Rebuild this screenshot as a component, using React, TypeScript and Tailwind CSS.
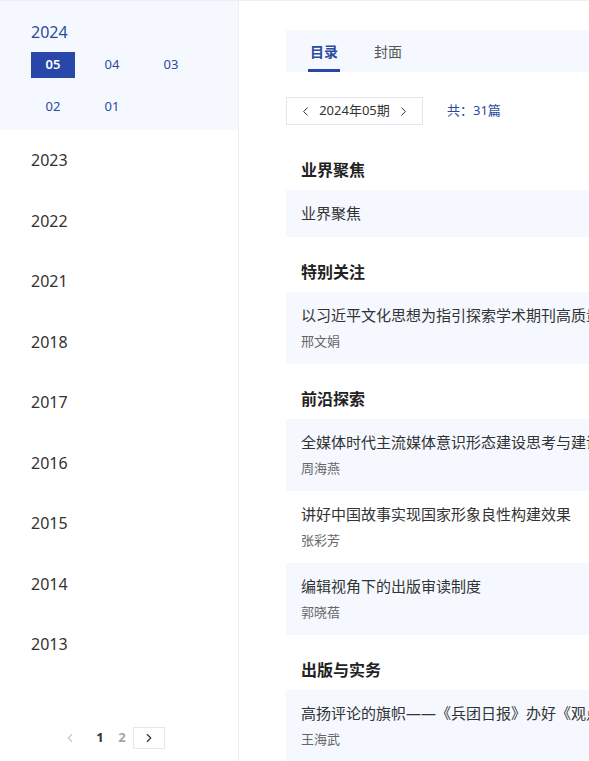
import React from "react";
import { ChevronLeft, ChevronRight } from "lucide-react";

const font = { fontFamily: '"Noto Sans", "Noto Sans CJK SC", sans-serif' };

type Item = { title: string; author?: string };
type Section = { name: string; items: Item[] };

const sections: Section[] = [
  { name: "业界聚焦", items: [{ title: "业界聚焦" }] },
  {
    name: "特别关注",
    items: [{ title: "以习近平文化思想为指引探索学术期刊高质量发展路径", author: "邢文娟" }],
  },
  {
    name: "前沿探索",
    items: [
      { title: "全媒体时代主流媒体意识形态建设思考与建议", author: "周海燕" },
      { title: "讲好中国故事实现国家形象良性构建效果", author: "张彩芳" },
      { title: "编辑视角下的出版审读制度", author: "郭晓蓓" },
    ],
  },
  {
    name: "出版与实务",
    items: [{ title: "高扬评论的旗帜——《兵团日报》办好《观点》版的实践与思考", author: "王海武" }],
  },
];

const years = ["2023", "2022", "2021", "2018", "2017", "2016", "2015", "2014", "2013"];
const issues = ["05", "04", "03", "02", "01"];

export default function App() {
  return (
    <div className="flex h-[761px] w-[589px] overflow-hidden border-t border-[#eceef1] bg-white" style={font}>
      <aside className="flex w-[239px] shrink-0 flex-col border-r border-[#eceef1]">
        <div className="bg-[#f5f9ff] pl-[31px] pt-[21px] pb-[10px]">
          <div className="text-[16px] leading-[20px] text-[#2b4aa0]">2024</div>
          <div className="mt-[10px] grid grid-cols-[44px_44px_44px] gap-x-[15px] gap-y-[16px]">
            {issues.map((n, i) => (
              <div
                key={n}
                className={
                  "flex h-[26px] w-[44px] items-center justify-center text-[13px] " +
                  (i === 0 ? "bg-[#2947a9] font-semibold text-white" : "text-[#2b4aa0]")
                }
              >
                {n}
              </div>
            ))}
          </div>
        </div>
        {years.map((y) => (
          <div key={y} className="flex h-[60.5px] items-center pl-[31px] text-[16px] text-[#333]">
            {y}
          </div>
        ))}
        <div className="mt-auto mb-[12px] flex items-center pl-[63px]">
          <ChevronLeft size={14} strokeWidth={2} className="mr-[12px] text-[#c5c8ce]" />
          <span className="w-[22px] text-center text-[13px] font-bold text-[#333]">1</span>
          <span className="w-[22px] text-center text-[13px] font-bold text-[#a0a6b0]">2</span>
          <div className="flex h-[22px] w-[32px] items-center justify-center border border-[#e5e7eb]">
            <ChevronRight size={14} strokeWidth={2} className="text-[#333]" />
          </div>
        </div>
      </aside>
      <main className="w-[900px] shrink-0 pl-[47px] pt-[29px]">
        <div className="flex h-[42px] items-end bg-[#f5f9ff] pl-[22px]">
          <div className="flex h-full flex-col items-center justify-center border-b-[3px] border-[#2947a9] px-[2px] pt-[3px] text-[14px] font-semibold text-[#2b4aa0]">
            目录
          </div>
          <div className="ml-[34px] flex h-full items-center text-[14px] text-[#555]">封面</div>
        </div>
        <div className="mt-[25px] flex items-center">
          <div className="flex h-[28px] w-[137px] items-center justify-center gap-[6px] border border-[#e3e5e8] text-[13px] text-[#333]">
            <ChevronLeft size={15} strokeWidth={1.6} />
            <span>2024年05期</span>
            <ChevronRight size={15} strokeWidth={1.6} />
          </div>
          <div className="ml-[24px] text-[13px] text-[#2b4aa0]">共：31篇</div>
        </div>
        <div className="mt-[10px]">
          {sections.map((s) => (
            <div key={s.name} className="pt-[15px]">
              <div className="flex h-[40px] items-center pl-[15px] text-[16px] font-bold text-[#222]">{s.name}</div>
              {s.items.map((it, ii) => (
                <div
                  key={it.title}
                  className={
                    "whitespace-nowrap pl-[15px] pt-[14px] " +
                    (it.author ? "pb-[14px] " : "pb-[15px] ") +
                    (ii % 2 === 0 ? "bg-[#f5f9ff]" : "bg-white")
                  }
                >
                  <div className="text-[15px] leading-[18px] text-[#333]">{it.title}</div>
                  {it.author && <div className="mt-[8px] text-[13px] leading-[18px] text-[#666]">{it.author}</div>}
                </div>
              ))}
            </div>
          ))}
        </div>
      </main>
    </div>
  );
}
